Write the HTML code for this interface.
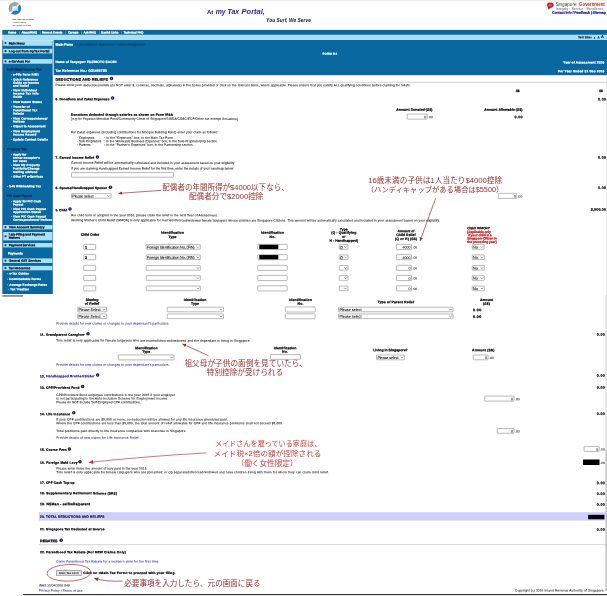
<!DOCTYPE html>
<html><head><meta charset="utf-8"><title>myTax Portal</title><style>

html,body{margin:0;padding:0;background:#fff;}
body{width:607px;height:596px;position:relative;overflow:hidden;font-family:"Liberation Sans",sans-serif;}
#pg{position:absolute;left:0;top:0;width:607px;height:596px;overflow:hidden;will-change:transform;transform:translateZ(0);}
#tx{position:absolute;left:0;top:0;width:607px;height:596px;transform-origin:303.5px 298px;transform:matrix(1,0.0007,0,1,0,0);}
.r{position:absolute;}
.t{position:absolute;white-space:nowrap;line-height:6px;height:6px;margin:0;padding:0;-webkit-text-stroke:0.07px;}
.b{font-weight:bold;-webkit-text-stroke:0.22px;}
.i{font-style:italic;}
.ic{position:absolute;width:3.4px;height:3.4px;border-radius:50%;background:radial-gradient(circle,#8c8cc0 0,#14145e 0.9px,#14145e 100%);}

.ov{position:absolute;left:0;top:0;}

</style></head><body><div id="pg">
<svg class="ov" width="607" height="596" viewBox="0 0 607 596"><rect x="0.00" y="0.40" width="607.00" height="0.80" fill="#e4e4e4"/><rect x="2.30" y="29.90" width="604.70" height="5.00" fill="#08689f"/><rect x="2.30" y="34.80" width="604.70" height="5.40" fill="#a9e0f5"/><rect x="3.20" y="40.00" width="49.20" height="0.50" fill="#c8ecfa"/><rect x="2.30" y="40.30" width="1.00" height="253.70" fill="#08689f"/><rect x="3.00" y="41.00" width="49.80" height="253.00" fill="#08689f"/><rect x="52.80" y="40.20" width="1.00" height="35.00" fill="#e4f5fc"/><rect x="53.70" y="40.00" width="553.30" height="35.20" fill="#08689f"/><rect x="2.30" y="295.00" width="20.80" height="1.80" fill="#8e8e8e"/><rect x="606.00" y="75.20" width="1.00" height="219.80" fill="#efefef"/><rect x="605.20" y="295.00" width="1.80" height="155.30" fill="#e4e4e4"/><rect x="605.40" y="450.30" width="1.60" height="141.10" fill="#c6c6c6"/><g><circle cx="14.9" cy="8.4" r="6.3" fill="#a2a2a6"/><path d="M10.45 12.85 A6.3 6.3 0 0 0 19.35 3.95 Z" fill="#1f80c4"/><path d="M12.4 10.8 L12.4 6.3 L18.1 6.3 Z" fill="#f4f8fb"/><path d="M12.4 10.8 L18.1 10.8 L18.1 6.3 Z" fill="#b4e0f6"/><path d="M10.3 13.0 L19.5 3.8" stroke="#fff" stroke-width="1.5" fill="none"/><path d="M11.2 12.1 L18.8 4.5" stroke="#9a9aa2" stroke-width="0.45" fill="none"/></g><text x="12.5" y="19.65" font-family="'Liberation Sans',sans-serif" font-size="2.35" font-weight="bold" fill="#3a3a3a" textLength="21.5" lengthAdjust="spacingAndGlyphs">INLAND REVENUE</text><text x="12.5" y="22.75" font-family="'Liberation Sans',sans-serif" font-size="2.35" font-weight="bold" fill="#3a3a3a" textLength="13.8" lengthAdjust="spacingAndGlyphs">AUTHORITY</text><text x="12.5" y="25.8" font-family="'Liberation Sans',sans-serif" font-size="2.35" font-weight="bold" fill="#3a3a3a" textLength="18.5" lengthAdjust="spacingAndGlyphs">OF SINGAPORE</text><text x="207" y="13.9" font-family="'Liberation Sans',sans-serif" font-size="5.4" font-weight="bold" fill="#17174a" textLength="6.4" lengthAdjust="spacingAndGlyphs">At</text><text x="215.7" y="13.9" font-family="'Liberation Sans',sans-serif" font-size="7.8" font-weight="bold" font-style="italic" fill="#1c1c90" textLength="23.4" lengthAdjust="spacingAndGlyphs">my Tax</text><text x="241.6" y="13.9" font-family="'Liberation Sans',sans-serif" font-size="7.8" font-weight="bold" font-style="italic" fill="#2626be" textLength="23.3" lengthAdjust="spacingAndGlyphs">Portal,</text><text x="266.1" y="21.7" font-family="'Liberation Sans',sans-serif" font-size="4.5" font-weight="bold" font-style="italic" fill="#151515" textLength="44.8" lengthAdjust="spacingAndGlyphs">You Surf, We Serve</text><text x="555.4" y="6.05" font-family="'Liberation Sans',sans-serif" font-size="4.5" fill="#3c3c3c" textLength="21.2" lengthAdjust="spacingAndGlyphs">Singapore</text><text x="579.1" y="6.05" font-family="'Liberation Sans',sans-serif" font-size="4.5" font-weight="bold" fill="#cc2222" textLength="25.7" lengthAdjust="spacingAndGlyphs">Government</text><text x="555.8" y="9.55" font-family="'Liberation Sans',sans-serif" font-size="3.2" fill="#666" textLength="47.7" lengthAdjust="spacingAndGlyphs">Integrity · Service · Excellence</text><g><path d="M547.1 4.4 Q547.6 2.9 549.2 2.6 Q551.2 2.2 552.6 3.0 Q553.9 3.8 553.7 5.2 Q553.5 6.8 551.9 7.6 Q550.4 8.1 549.6 8.8 L548.6 9.9 Q548.4 8.4 547.9 7.4 Q546.9 6.0 547.1 4.4 Z" fill="#cf1a26"/><ellipse cx="550.2" cy="5.3" rx="1.6" ry="1.3" fill="#ee5564"/></g><rect x="3.20" y="40.30" width="49.20" height="5.50" fill="#a9e0f5"/><rect x="4.60" y="42.15" width="1.80" height="1.80" fill="#3c2040"/><rect x="3.20" y="48.80" width="49.20" height="4.60" fill="#a9e0f5"/><rect x="4.60" y="50.20" width="1.80" height="1.80" fill="#3c2040"/><rect x="3.20" y="59.10" width="49.20" height="4.60" fill="#a9e0f5"/><rect x="4.60" y="60.50" width="1.80" height="1.80" fill="#3c2040"/><rect x="3.20" y="225.00" width="49.20" height="4.40" fill="#a9e0f5"/><rect x="4.60" y="226.30" width="1.80" height="1.80" fill="#3c2040"/><rect x="3.20" y="232.00" width="49.20" height="8.40" fill="#a9e0f5"/><rect x="4.60" y="235.30" width="1.80" height="1.80" fill="#3c2040"/><rect x="3.20" y="243.00" width="49.20" height="4.40" fill="#a9e0f5"/><rect x="4.60" y="244.30" width="1.80" height="1.80" fill="#3c2040"/><rect x="3.20" y="258.40" width="49.20" height="4.60" fill="#a9e0f5"/><rect x="4.60" y="259.80" width="1.80" height="1.80" fill="#3c2040"/><rect x="3.20" y="265.90" width="49.20" height="4.40" fill="#a9e0f5"/><rect x="4.60" y="267.20" width="1.80" height="1.80" fill="#3c2040"/><rect x="11.00" y="74.35" width="0.80" height="0.80" fill="#e6f4fb"/><rect x="11.00" y="79.35" width="0.80" height="0.80" fill="#e6f4fb"/><rect x="11.00" y="90.05" width="0.80" height="0.80" fill="#e6f4fb"/><rect x="11.00" y="101.65" width="0.80" height="0.80" fill="#e6f4fb"/><rect x="11.00" y="106.55" width="0.80" height="0.80" fill="#e6f4fb"/><rect x="11.00" y="118.15" width="0.80" height="0.80" fill="#e6f4fb"/><rect x="11.00" y="126.05" width="0.80" height="0.80" fill="#e6f4fb"/><rect x="11.00" y="131.05" width="0.80" height="0.80" fill="#e6f4fb"/><rect x="11.00" y="139.25" width="0.80" height="0.80" fill="#e6f4fb"/><rect x="11.00" y="154.15" width="0.80" height="0.80" fill="#e6f4fb"/><rect x="11.00" y="164.85" width="0.80" height="0.80" fill="#e6f4fb"/><rect x="11.00" y="176.35" width="0.80" height="0.80" fill="#e6f4fb"/><rect x="7.30" y="186.05" width="0.80" height="0.80" fill="#e6f4fb"/><rect x="11.00" y="201.05" width="0.80" height="0.80" fill="#e6f4fb"/><rect x="11.00" y="208.65" width="0.80" height="0.80" fill="#e6f4fb"/><rect x="11.00" y="216.25" width="0.80" height="0.80" fill="#e6f4fb"/><rect x="7.30" y="273.35" width="0.80" height="0.80" fill="#e6f4fb"/><rect x="7.30" y="278.75" width="0.80" height="0.80" fill="#e6f4fb"/><rect x="7.30" y="284.45" width="0.80" height="0.80" fill="#e6f4fb"/><rect x="8.30" y="289.05" width="0.80" height="0.80" fill="#e6f4fb"/><rect x="53.70" y="81.85" width="553.30" height="0.70" fill="#c0c0c0"/><rect x="407.27" y="114.03" width="19.95" height="5.15" rx="0.4" fill="#fff" stroke="#808080" stroke-width="0.55"/><rect x="71.48" y="172.58" width="102.05" height="4.65" rx="0.4" fill="#fff" stroke="#808080" stroke-width="0.55"/><rect x="71.48" y="193.62" width="39.65" height="4.55" rx="0.3" fill="#fff" stroke="#808080" stroke-width="0.55"/><rect x="498.27" y="193.33" width="18.45" height="5.15" rx="0.4" fill="#fff" stroke="#808080" stroke-width="0.55"/><rect x="83.78" y="244.33" width="11.85" height="5.15" rx="0.4" fill="#fff" stroke="#808080" stroke-width="0.55"/><rect x="146.18" y="244.58" width="54.15" height="4.65" rx="0.3" fill="#fff" stroke="#808080" stroke-width="0.55"/><rect x="257.77" y="244.33" width="29.45" height="5.15" rx="0.8" fill="#fff" stroke="#808080" stroke-width="0.55"/><rect x="259.30" y="244.75" width="19.00" height="4.30" fill="#000"/><rect x="339.27" y="244.58" width="8.75" height="4.65" rx="0.3" fill="#fff" stroke="#808080" stroke-width="0.55"/><rect x="396.57" y="244.33" width="14.95" height="5.15" rx="0.4" fill="#fff" stroke="#808080" stroke-width="0.55"/><rect x="472.27" y="244.58" width="11.95" height="4.65" rx="0.3" fill="#fff" stroke="#808080" stroke-width="0.55"/><rect x="83.78" y="254.62" width="11.85" height="5.15" rx="0.4" fill="#fff" stroke="#808080" stroke-width="0.55"/><rect x="146.18" y="254.88" width="54.15" height="4.65" rx="0.3" fill="#fff" stroke="#808080" stroke-width="0.55"/><rect x="257.77" y="254.62" width="29.45" height="5.15" rx="0.8" fill="#fff" stroke="#808080" stroke-width="0.55"/><rect x="259.30" y="255.05" width="19.00" height="4.30" fill="#000"/><rect x="339.27" y="254.88" width="8.75" height="4.65" rx="0.3" fill="#fff" stroke="#808080" stroke-width="0.55"/><rect x="396.57" y="254.62" width="14.95" height="5.15" rx="0.4" fill="#fff" stroke="#808080" stroke-width="0.55"/><rect x="472.27" y="254.88" width="11.95" height="4.65" rx="0.3" fill="#fff" stroke="#808080" stroke-width="0.55"/><rect x="83.78" y="265.32" width="11.85" height="5.15" rx="0.4" fill="#fff" stroke="#808080" stroke-width="0.55"/><rect x="146.18" y="265.57" width="54.15" height="4.65" rx="0.3" fill="#fff" stroke="#808080" stroke-width="0.55"/><rect x="257.77" y="265.32" width="29.45" height="5.15" rx="0.8" fill="#fff" stroke="#808080" stroke-width="0.55"/><rect x="339.27" y="265.57" width="8.75" height="4.65" rx="0.3" fill="#fff" stroke="#808080" stroke-width="0.55"/><rect x="396.57" y="265.32" width="14.95" height="5.15" rx="0.4" fill="#fff" stroke="#808080" stroke-width="0.55"/><rect x="472.27" y="265.57" width="11.95" height="4.65" rx="0.3" fill="#fff" stroke="#808080" stroke-width="0.55"/><rect x="83.78" y="275.42" width="11.85" height="5.15" rx="0.4" fill="#fff" stroke="#808080" stroke-width="0.55"/><rect x="146.18" y="275.67" width="54.15" height="4.65" rx="0.3" fill="#fff" stroke="#808080" stroke-width="0.55"/><rect x="257.77" y="275.42" width="29.45" height="5.15" rx="0.8" fill="#fff" stroke="#808080" stroke-width="0.55"/><rect x="339.27" y="275.67" width="8.75" height="4.65" rx="0.3" fill="#fff" stroke="#808080" stroke-width="0.55"/><rect x="396.57" y="275.42" width="14.95" height="5.15" rx="0.4" fill="#fff" stroke="#808080" stroke-width="0.55"/><rect x="472.27" y="275.67" width="11.95" height="4.65" rx="0.3" fill="#fff" stroke="#808080" stroke-width="0.55"/><rect x="83.78" y="285.82" width="11.85" height="5.15" rx="0.4" fill="#fff" stroke="#808080" stroke-width="0.55"/><rect x="146.18" y="286.07" width="54.15" height="4.65" rx="0.3" fill="#fff" stroke="#808080" stroke-width="0.55"/><rect x="257.77" y="285.82" width="29.45" height="5.15" rx="0.8" fill="#fff" stroke="#808080" stroke-width="0.55"/><rect x="339.27" y="286.07" width="8.75" height="4.65" rx="0.3" fill="#fff" stroke="#808080" stroke-width="0.55"/><rect x="396.57" y="285.82" width="14.95" height="5.15" rx="0.4" fill="#fff" stroke="#808080" stroke-width="0.55"/><rect x="472.27" y="286.07" width="11.95" height="4.65" rx="0.3" fill="#fff" stroke="#808080" stroke-width="0.55"/><rect x="77.78" y="307.17" width="28.75" height="4.65" rx="0.3" fill="#fff" stroke="#808080" stroke-width="0.55"/><rect x="167.28" y="307.17" width="56.25" height="4.65" rx="0.3" fill="#fff" stroke="#808080" stroke-width="0.55"/><rect x="285.27" y="306.97" width="29.95" height="5.05" rx="1.0" fill="#fff" stroke="#808080" stroke-width="0.55"/><rect x="338.57" y="307.17" width="114.45" height="4.65" rx="0.3" fill="#fff" stroke="#808080" stroke-width="0.55"/><rect x="77.78" y="313.97" width="28.75" height="4.65" rx="0.3" fill="#fff" stroke="#808080" stroke-width="0.55"/><rect x="167.28" y="313.97" width="56.25" height="4.65" rx="0.3" fill="#fff" stroke="#808080" stroke-width="0.55"/><rect x="285.27" y="313.77" width="29.95" height="5.05" rx="1.0" fill="#fff" stroke="#808080" stroke-width="0.55"/><rect x="338.57" y="313.97" width="114.45" height="4.65" rx="0.3" fill="#fff" stroke="#808080" stroke-width="0.55"/><rect x="118.28" y="354.87" width="55.75" height="5.05" rx="0.3" fill="#fff" stroke="#808080" stroke-width="0.55"/><rect x="270.47" y="354.62" width="29.95" height="4.75" rx="0.4" fill="#fff" stroke="#808080" stroke-width="0.55"/><rect x="376.57" y="354.97" width="27.65" height="4.85" rx="0.3" fill="#fff" stroke="#808080" stroke-width="0.55"/><rect x="473.27" y="354.97" width="14.75" height="4.85" rx="0.4" fill="#fff" stroke="#808080" stroke-width="0.55"/><rect x="484.77" y="396.07" width="29.25" height="5.05" rx="0.4" fill="#fff" stroke="#808080" stroke-width="0.55"/><rect x="497.27" y="428.57" width="16.75" height="4.65" rx="0.4" fill="#fff" stroke="#808080" stroke-width="0.55"/><rect x="584.07" y="446.57" width="15.15" height="4.85" rx="0.4" fill="#fff" stroke="#808080" stroke-width="0.55"/><rect x="583.00" y="459.50" width="16.50" height="5.50" fill="#000"/><rect x="38.80" y="512.20" width="566.70" height="8.40" fill="#cfcff8"/><rect x="588.10" y="514.80" width="16.30" height="4.50" fill="#05050f"/><rect x="38.80" y="544.40" width="568.20" height="0.70" fill="#c6c6c6"/><rect x="56.55" y="570.65" width="24.90" height="4.60" rx="0" fill="#e6e6e6" stroke="#888" stroke-width="0.7"/><rect x="23.20" y="594.10" width="583.80" height="1.00" fill="#1a1a1a"/></svg>
<div id="tx">
<div id="t0" class="t b" style="top:9px;transform:translateY(0.66px);font-size:3.5px;color:#2222a8;letter-spacing:-0.070px;left:552.00px;"><span>Contact Info / Feedback | Sitemap</span></div>
<div id="t1" class="t b" style="top:29px;transform:translateY(0.62px);font-size:3.05px;color:#fff;letter-spacing:-0.156px;left:8.10px;"><span>Home</span></div>
<div id="t2" class="t" style="top:29px;transform:translateY(0.71px);font-size:2.8px;color:#b8dcf0;left:19.00px;"><span>|</span></div>
<div id="t3" class="t b" style="top:29px;transform:translateY(0.61px);font-size:3.05px;color:#fff;letter-spacing:-0.160px;left:21.50px;"><span>About IRAS</span></div>
<div id="t4" class="t" style="top:29px;transform:translateY(0.69px);font-size:2.8px;color:#b8dcf0;left:39.80px;"><span>|</span></div>
<div id="t5" class="t b" style="top:29px;transform:translateY(0.59px);font-size:3.05px;color:#fff;letter-spacing:-0.113px;left:42.00px;"><span>News &amp; Events</span></div>
<div id="t6" class="t" style="top:29px;transform:translateY(0.67px);font-size:2.8px;color:#b8dcf0;left:65.30px;"><span>|</span></div>
<div id="t7" class="t b" style="top:29px;transform:translateY(0.58px);font-size:3.05px;color:#fff;letter-spacing:-0.143px;left:68.00px;"><span>Careers</span></div>
<div id="t8" class="t" style="top:29px;transform:translateY(0.66px);font-size:2.8px;color:#b8dcf0;left:81.40px;"><span>|</span></div>
<div id="t9" class="t b" style="top:29px;transform:translateY(0.56px);font-size:3.05px;color:#fff;letter-spacing:-0.174px;left:83.50px;"><span>Ask IRAS</span></div>
<div id="t10" class="t" style="top:29px;transform:translateY(0.65px);font-size:2.8px;color:#b8dcf0;left:99.20px;"><span>|</span></div>
<div id="t11" class="t b" style="top:29px;transform:translateY(0.55px);font-size:3.05px;color:#fff;letter-spacing:-0.057px;left:101.00px;"><span>Useful Links</span></div>
<div id="t12" class="t" style="top:29px;transform:translateY(0.63px);font-size:2.8px;color:#b8dcf0;left:121.40px;"><span>|</span></div>
<div id="t13" class="t b" style="top:29px;transform:translateY(0.53px);font-size:3.05px;color:#fff;letter-spacing:-0.079px;left:123.50px;"><span>Technical FAQ</span></div>
<div id="t14" class="t b" style="top:34px;transform:translateY(0.17px);font-size:2.9px;color:#1a2a3a;letter-spacing:0.058px;left:577.90px;"><span>Text Size:</span></div>
<div id="t15" class="t b" style="top:34px;transform:translateY(0.42px);font-size:2.0px;color:#1a2a3a;left:593.70px;"><span>A</span></div>
<div id="t16" class="t b" style="top:34px;transform:translateY(0.40px);font-size:2.8px;color:#1a2a3a;left:597.40px;"><span>A</span></div>
<div id="t17" class="t b" style="top:33px;transform:translateY(0.90px);font-size:3.9px;color:#1a2a3a;left:601.00px;"><span>A</span></div>
<div id="t18" class="t b" style="top:41px;transform:translateY(0.82px);font-size:3.5px;color:#fff;letter-spacing:-0.038px;left:55.60px;"><span>Main Form</span></div>
<div id="t19" class="t i" style="top:41px;transform:translateY(0.73px);font-size:3.3px;color:#063a60;letter-spacing:0.061px;left:74.30px;"><span>&gt; Consolidated Statement &gt; Acknowledgement</span></div>
<div id="t20" class="t b" style="top:50px;transform:translateY(0.83px);font-size:2.9px;color:#fff;letter-spacing:0.247px;left:322.50px;"><span>FORM B1</span></div>
<div id="t21" class="t b" style="top:59px;transform:translateY(0.14px);font-size:3.3px;color:#fff;letter-spacing:0.074px;left:55.50px;"><span>Name of Taxpayer: FUJIMOTO SAORI</span></div>
<div id="t22" class="t b" style="top:67px;transform:translateY(0.95px);font-size:3.3px;color:#fff;letter-spacing:0.117px;left:55.50px;"><span>Tax Reference No.: G3149573B</span></div>
<div id="t23" class="t b" style="top:59px;transform:translateY(0.26px);font-size:3.2px;color:#fff;letter-spacing:0.129px;left:563.30px;"><span>Year of Assessment 2016</span></div>
<div id="t24" class="t b" style="top:68px;transform:translateY(0.07px);font-size:3.2px;color:#fff;letter-spacing:0.153px;left:558.00px;"><span>For Year Ended 31 Dec 2015</span></div>
<div id="t25" class="t b" style="top:40px;transform:translateY(0.59px);font-size:3.3px;color:#0a1428;letter-spacing:-0.106px;left:8.70px;"><span>Main Menu</span></div>
<div id="t26" class="t b" style="top:48px;transform:translateY(0.38px);font-size:3.3px;color:#0a1428;letter-spacing:-0.038px;left:8.70px;"><span>Log out from myTax Portal</span></div>
<div id="t27" class="t b" style="top:58px;transform:translateY(0.59px);font-size:3.3px;color:#0a1428;letter-spacing:-0.110px;left:8.70px;"><span>e-Services For</span></div>
<div id="t28" class="t b" style="top:224px;transform:translateY(0.38px);font-size:3.3px;color:#0a1428;letter-spacing:-0.084px;left:8.70px;"><span>View Account Summary</span></div>
<div id="t29" class="t b" style="top:231px;transform:translateY(0.58px);font-size:3.3px;color:#0a1428;letter-spacing:-0.074px;left:8.70px;"><span>Late Filing and Payment</span></div>
<div id="t30" class="t b" style="top:234px;transform:translateY(0.89px);font-size:3.3px;color:#0a1428;letter-spacing:-0.072px;left:8.70px;"><span>Matters</span></div>
<div id="t31" class="t b" style="top:242px;transform:translateY(0.49px);font-size:3.3px;color:#0a1428;letter-spacing:-0.109px;left:8.70px;"><span>Payment Services</span></div>
<div id="t32" class="t b" style="top:257px;transform:translateY(0.89px);font-size:3.3px;color:#0a1428;letter-spacing:-0.113px;left:8.70px;"><span>General GST Services</span></div>
<div id="t33" class="t b" style="top:265px;transform:translateY(0.39px);font-size:3.3px;color:#0a1428;letter-spacing:-0.135px;left:8.70px;"><span>Tax Resources</span></div>
<div id="t34" class="t b" style="top:66px;transform:translateY(0.76px);font-size:3.2px;color:#0b2a5a;letter-spacing:0.072px;left:7.00px;"><span>Individual Income Tax</span></div>
<div id="t35" class="t b" style="top:146px;transform:translateY(0.46px);font-size:3.2px;color:#0b2a5a;letter-spacing:0.023px;left:7.00px;"><span>Property Tax</span></div>
<div id="t36" class="t b" style="top:193px;transform:translateY(0.16px);font-size:3.2px;color:#0b2a5a;letter-spacing:-0.051px;left:7.00px;"><span>PIC Cash Payout</span></div>
<div id="t37" class="t b" style="top:71px;transform:translateY(0.78px);font-size:2.95px;color:#fff;letter-spacing:0.164px;left:13.00px;"><span>e-File Form B/B1</span></div>
<div id="t38" class="t b" style="top:76px;transform:translateY(0.78px);font-size:2.95px;color:#fff;letter-spacing:0.115px;left:13.00px;"><span>Quick Reference</span></div>
<div id="t39" class="t b" style="top:79px;transform:translateY(0.88px);font-size:2.95px;color:#fff;letter-spacing:0.140px;left:13.00px;"><span>Guide on Income</span></div>
<div id="t40" class="t b" style="top:82px;transform:translateY(0.88px);font-size:2.95px;color:#fff;letter-spacing:0.195px;left:13.00px;"><span>and Relief</span></div>
<div id="t41" class="t b" style="top:87px;transform:translateY(0.48px);font-size:2.95px;color:#fff;letter-spacing:0.188px;left:13.00px;"><span>View Individual</span></div>
<div id="t42" class="t b" style="top:90px;transform:translateY(0.68px);font-size:2.95px;color:#fff;letter-spacing:0.239px;left:13.00px;"><span>Income Tax Info</span></div>
<div id="t43" class="t b" style="top:93px;transform:translateY(0.99px);font-size:2.95px;color:#fff;letter-spacing:0.168px;left:13.00px;"><span>Guide</span></div>
<div id="t44" class="t b" style="top:99px;transform:translateY(0.08px);font-size:2.95px;color:#fff;letter-spacing:0.122px;left:13.00px;"><span>View Return Status</span></div>
<div id="t45" class="t b" style="top:103px;transform:translateY(0.98px);font-size:2.95px;color:#fff;letter-spacing:0.161px;left:13.00px;"><span>Transfer of</span></div>
<div id="t46" class="t b" style="top:107px;transform:translateY(0.38px);font-size:2.95px;color:#fff;letter-spacing:0.178px;left:13.00px;"><span>Parenthood Tax</span></div>
<div id="t47" class="t b" style="top:110px;transform:translateY(0.58px);font-size:2.95px;color:#fff;letter-spacing:0.221px;left:13.00px;"><span>Rebate</span></div>
<div id="t48" class="t b" style="top:115px;transform:translateY(0.58px);font-size:2.95px;color:#fff;letter-spacing:0.141px;left:13.00px;"><span>View Correspondence/</span></div>
<div id="t49" class="t b" style="top:118px;transform:translateY(0.68px);font-size:2.95px;color:#fff;letter-spacing:0.163px;left:13.00px;"><span>Notices</span></div>
<div id="t50" class="t b" style="top:123px;transform:translateY(0.48px);font-size:2.95px;color:#fff;letter-spacing:0.097px;left:13.00px;"><span>Object to Assessment</span></div>
<div id="t51" class="t b" style="top:128px;transform:translateY(0.48px);font-size:2.95px;color:#fff;letter-spacing:0.136px;left:13.00px;"><span>View Employment</span></div>
<div id="t52" class="t b" style="top:131px;transform:translateY(0.68px);font-size:2.95px;color:#fff;letter-spacing:0.172px;left:13.00px;"><span>Income Record</span></div>
<div id="t53" class="t b" style="top:136px;transform:translateY(0.68px);font-size:2.95px;color:#fff;letter-spacing:0.126px;left:13.00px;"><span>Update Contact Details</span></div>
<div id="t54" class="t b" style="top:151px;transform:translateY(0.58px);font-size:2.95px;color:#fff;letter-spacing:0.049px;left:13.00px;"><span>Apply for</span></div>
<div id="t55" class="t b" style="top:154px;transform:translateY(0.88px);font-size:2.95px;color:#fff;letter-spacing:0.172px;left:13.00px;"><span>owner-occupier's</span></div>
<div id="t56" class="t b" style="top:158px;transform:translateY(0.08px);font-size:2.95px;color:#fff;letter-spacing:0.238px;left:13.00px;"><span>tax rates</span></div>
<div id="t57" class="t b" style="top:162px;transform:translateY(0.28px);font-size:2.95px;color:#fff;letter-spacing:0.157px;left:13.00px;"><span>View My Property</span></div>
<div id="t58" class="t b" style="top:165px;transform:translateY(0.68px);font-size:2.95px;color:#fff;letter-spacing:0.189px;left:13.00px;"><span>Portfolio/Change</span></div>
<div id="t59" class="t b" style="top:169px;transform:translateY(0.08px);font-size:2.95px;color:#fff;letter-spacing:0.137px;left:13.00px;"><span>mailing address</span></div>
<div id="t60" class="t b" style="top:173px;transform:translateY(0.78px);font-size:2.95px;color:#fff;letter-spacing:0.104px;left:13.00px;"><span>Other PT e-Services</span></div>
<div id="t61" class="t b" style="top:183px;transform:translateY(0.48px);font-size:2.95px;color:#fff;letter-spacing:0.169px;left:9.30px;"><span>S45 Withholding Tax</span></div>
<div id="t62" class="t b" style="top:198px;transform:translateY(0.48px);font-size:2.95px;color:#fff;letter-spacing:0.082px;left:13.00px;"><span>Apply for PIC Cash</span></div>
<div id="t63" class="t b" style="top:201px;transform:translateY(0.68px);font-size:2.95px;color:#fff;letter-spacing:0.101px;left:13.00px;"><span>Payout</span></div>
<div id="t64" class="t b" style="top:206px;transform:translateY(0.08px);font-size:2.95px;color:#fff;letter-spacing:0.107px;left:13.00px;"><span>View PIC Cash Payout</span></div>
<div id="t65" class="t b" style="top:209px;transform:translateY(0.28px);font-size:2.95px;color:#fff;letter-spacing:0.130px;left:13.00px;"><span>Application Status</span></div>
<div id="t66" class="t b" style="top:213px;transform:translateY(0.68px);font-size:2.95px;color:#fff;letter-spacing:0.107px;left:13.00px;"><span>View PIC Cash Payout</span></div>
<div id="t67" class="t b" style="top:216px;transform:translateY(0.87px);font-size:2.95px;color:#fff;letter-spacing:0.155px;left:13.00px;"><span>Correspondence/ Notices</span></div>
<div id="t68" class="t b" style="top:250px;transform:translateY(0.66px);font-size:3.2px;color:#fff;letter-spacing:-0.037px;left:8.00px;"><span>Payments</span></div>
<div id="t69" class="t b" style="top:270px;transform:translateY(0.78px);font-size:2.95px;color:#fff;letter-spacing:0.115px;left:9.30px;"><span>e-Tax Guides</span></div>
<div id="t70" class="t b" style="top:276px;transform:translateY(0.18px);font-size:2.95px;color:#fff;letter-spacing:0.105px;left:9.30px;"><span>Downloadable Forms</span></div>
<div id="t71" class="t b" style="top:281px;transform:translateY(0.88px);font-size:2.95px;color:#fff;letter-spacing:0.119px;left:9.30px;"><span>Average Exchange Rates</span></div>
<div id="t72" class="t b" style="top:286px;transform:translateY(0.48px);font-size:2.95px;color:#fff;letter-spacing:0.158px;left:10.30px;"><span>Tax Treaties</span></div>
<div id="t73" class="t b" style="top:76px;transform:translateY(0.89px);font-size:3.7px;color:#000;letter-spacing:0.126px;left:55.50px;"><span>DEDUCTIONS AND RELIEFS</span></div>
<div id="t74" class="t" style="top:82px;transform:translateY(0.28px);font-size:3.1px;color:#111;letter-spacing:0.126px;left:55.50px;"><span>Please enter your deductions/reliefs (do NOT enter $, commas, decimals, alphabets) in the boxes provided or click on the relevant items, where applicable. Please ensure that you satisfy ALL qualifying conditions before claiming for reliefs.</span></div>
<div id="t75" class="t b" style="top:87px;transform:translateY(0.84px);font-size:3.3px;color:#000;letter-spacing:-0.347px;left:515.80px;"><span>S$</span></div>
<div id="t76" class="t b" style="top:87px;transform:translateY(0.78px);font-size:3.3px;color:#000;letter-spacing:-0.247px;left:599.00px;"><span>S$</span></div>
<div id="t77" class="t b" style="top:96px;transform:translateY(0.41px);font-size:3.2px;color:#000;letter-spacing:0.111px;left:55.50px;"><span>6. Donations and Zakat Expenses</span></div>
<div id="t78" class="t b" style="top:96px;transform:translateY(0.22px);font-size:3.7px;color:#111;letter-spacing:0.271px;right:0.73px;"><span>0.00</span></div>
<div id="t79" class="t b" style="top:106px;transform:translateY(0.76px);font-size:3.45px;color:#000;letter-spacing:0.059px;left:396.30px;"><span>Amount Donated (S$)</span></div>
<div id="t80" class="t b" style="top:106px;transform:translateY(0.70px);font-size:3.45px;color:#000;letter-spacing:0.044px;left:484.30px;"><span>Amount Allowable (S$)</span></div>
<div id="t81" class="t b" style="top:111px;transform:translateY(0.87px);font-size:3.15px;color:#000;letter-spacing:0.176px;left:71.00px;"><span>Donations deducted through salaries as shown on Form IR8A</span></div>
<div id="t82" class="t" style="top:115px;transform:translateY(0.93px);font-size:3.1px;color:#111;letter-spacing:0.134px;left:71.00px;"><span>(e.g for Yayasan Mendaki Fund/Community Chest of Singapore/SINDA/CDAC/ECF/Other tax exempt donations)</span></div>
<div id="t83" class="t b" style="top:114px;transform:translateY(0.08px);font-size:3.7px;color:#111;letter-spacing:0.271px;right:84.23px;"><span>0.00</span></div>
<div id="t84" class="t" style="top:129px;transform:translateY(0.34px);font-size:3.1px;color:#111;letter-spacing:0.122px;left:71.00px;"><span>For Zakat expenses (including contributions for Mosque Building Fund) enter your claim as follows:</span></div>
<div id="t85" class="t" style="top:134px;transform:translateY(0.88px);font-size:3.1px;color:#111;left:77.00px;"><span>- Employees</span></div>
<div id="t86" class="t" style="top:134px;transform:translateY(0.85px);font-size:3.1px;color:#111;letter-spacing:0.145px;left:104.30px;"><span>: in the "Expenses" box, in the Main Tax Form.</span></div>
<div id="t87" class="t" style="top:138px;transform:translateY(0.38px);font-size:3.1px;color:#111;left:77.00px;"><span>- Sole-Proprietors</span></div>
<div id="t88" class="t" style="top:138px;transform:translateY(0.33px);font-size:3.1px;color:#111;letter-spacing:0.080px;left:104.30px;"><span>: in the "Allowable Business Expenses" box, in the Sole-Proprietorship section.</span></div>
<div id="t89" class="t" style="top:141px;transform:translateY(0.98px);font-size:3.1px;color:#111;left:77.00px;"><span>- Partners</span></div>
<div id="t90" class="t" style="top:141px;transform:translateY(0.94px);font-size:3.1px;color:#111;letter-spacing:0.111px;left:104.30px;"><span>: in the "Partner's Expenses" box, in the Partnership section.</span></div>
<div id="t91" class="t b" style="top:154px;transform:translateY(0.92px);font-size:3.2px;color:#000;letter-spacing:0.115px;left:55.50px;"><span>7. Earned Income Relief</span></div>
<div id="t92" class="t b" style="top:154px;transform:translateY(0.42px);font-size:3.7px;color:#111;letter-spacing:0.271px;right:0.73px;"><span>0.00</span></div>
<div id="t93" class="t" style="top:159px;transform:translateY(0.99px);font-size:3.1px;color:#111;letter-spacing:0.102px;left:71.20px;"><span>Earned Income Relief will be automatically calculated and included in your assessment based on your eligibility.</span></div>
<div id="t94" class="t" style="top:165px;transform:translateY(0.54px);font-size:3.1px;color:#111;letter-spacing:0.077px;left:71.20px;"><span>If you are claiming Handicapped Earned Income Relief for the first time, enter the details of your handicap below.</span></div>
<div id="t95" class="t b" style="top:185px;transform:translateY(0.22px);font-size:3.2px;color:#000;letter-spacing:0.116px;left:55.50px;"><span>8. Spouse/Handicapped Spouse</span></div>
<div id="t96" class="t b" style="top:184px;transform:translateY(0.87px);font-size:3.7px;color:#111;letter-spacing:0.271px;right:0.73px;"><span>0.00</span></div>
<div id="t97" class="t b" style="top:207px;transform:translateY(0.53px);font-size:3.2px;color:#000;letter-spacing:0.026px;left:55.50px;"><span>9. Child</span></div>
<div id="t98" class="t b" style="top:206px;transform:translateY(0.53px);font-size:3.7px;color:#111;letter-spacing:0.120px;right:0.88px;"><span>8,000.00</span></div>
<div id="t99" class="t" style="top:212px;transform:translateY(0.44px);font-size:3.1px;color:#111;letter-spacing:0.133px;left:71.20px;"><span>For child born or adopted in the year 2016, please claim the relief in the next Year of Assessment.</span></div>
<div id="t100" class="t" style="top:217px;transform:translateY(0.46px);font-size:3.1px;color:#111;letter-spacing:0.123px;left:71.20px;"><span>Working Mother's Child Relief (WMCR) is only applicable for married/divorced/widowed female taxpayers whose children are Singapore Citizens. This amount will be automatically calculated and included in your assessment based on your eligibility.</span></div>
<div id="t101" class="t b" style="top:231px;transform:translateY(0.98px);font-size:3.45px;color:#000;letter-spacing:-0.042px;left:-10.02px;width:200px;text-align:center;"><span>Child Order</span></div>
<div id="t102" class="t b" style="top:229px;transform:translateY(0.93px);font-size:3.45px;color:#000;letter-spacing:0.085px;left:72.54px;width:200px;text-align:center;"><span>Identification</span></div>
<div id="t103" class="t b" style="top:234px;transform:translateY(0.13px);font-size:3.45px;color:#000;letter-spacing:0.073px;left:72.54px;width:200px;text-align:center;"><span>Type</span></div>
<div id="t104" class="t b" style="top:229px;transform:translateY(0.86px);font-size:3.45px;color:#000;letter-spacing:0.085px;left:172.54px;width:200px;text-align:center;"><span>Identification</span></div>
<div id="t105" class="t b" style="top:234px;transform:translateY(0.06px);font-size:3.45px;color:#000;letter-spacing:0.227px;left:172.61px;width:200px;text-align:center;"><span>No.</span></div>
<div id="t106" class="t b" style="top:226px;transform:translateY(0.51px);font-size:3.45px;color:#000;letter-spacing:0.073px;left:243.84px;width:200px;text-align:center;"><span>Type</span></div>
<div id="t107" class="t b" style="top:229px;transform:translateY(0.81px);font-size:3.45px;color:#000;letter-spacing:0.094px;left:243.85px;width:200px;text-align:center;"><span>(Q - Qualifying</span></div>
<div id="t108" class="t b" style="top:233px;transform:translateY(0.81px);font-size:3.45px;color:#000;left:243.80px;width:200px;text-align:center;"><span>or</span></div>
<div id="t109" class="t b" style="top:237px;transform:translateY(0.81px);font-size:3.45px;color:#000;letter-spacing:0.016px;left:243.81px;width:200px;text-align:center;"><span>H - Handicapped)</span></div>
<div id="t110" class="t b" style="top:228px;transform:translateY(0.06px);font-size:3.45px;color:#000;letter-spacing:-0.023px;left:305.99px;width:200px;text-align:center;"><span>Amount of</span></div>
<div id="t111" class="t b" style="top:231px;transform:translateY(0.86px);font-size:3.45px;color:#000;letter-spacing:0.053px;left:306.03px;width:200px;text-align:center;"><span>Child Relief</span></div>
<div id="t112" class="t b" style="top:235px;transform:translateY(0.96px);font-size:3.45px;color:#000;letter-spacing:0.146px;left:306.07px;width:200px;text-align:center;"><span>(Q or H) (S$)</span></div>
<div id="t113" class="t b" style="top:225px;transform:translateY(0.07px);font-size:3.3px;color:#000;letter-spacing:-0.003px;left:467.20px;"><span>Claim WMCR?</span></div>
<div id="t114" class="t b" style="top:228px;transform:translateY(0.87px);font-size:3.3px;color:#c81818;letter-spacing:-0.118px;left:467.20px;"><span>[Applicable only</span></div>
<div id="t115" class="t b" style="top:232px;transform:translateY(0.17px);font-size:3.3px;color:#c81818;letter-spacing:-0.095px;left:468.20px;"><span>if your child is a</span></div>
<div id="t116" class="t b" style="top:235px;transform:translateY(0.47px);font-size:3.3px;color:#c81818;letter-spacing:-0.116px;left:467.20px;"><span>Singapore Citizen in</span></div>
<div id="t117" class="t b" style="top:238px;transform:translateY(0.97px);font-size:3.3px;color:#c81818;letter-spacing:-0.051px;left:467.20px;"><span>the preceding year]</span></div>
<div id="t118" class="t" style="top:114px;transform:translateY(0.21px);font-size:3.6px;color:#111;right:180.80px;"><span>0</span></div>
<div id="t119" class="t" style="top:114px;transform:translateY(0.10px);font-size:3.3px;color:#222;left:428.20px;"><span>.00</span></div>
<div id="t120" class="t" style="top:193px;transform:translateY(0.59px);font-size:3.8px;color:#000;letter-spacing:-0.116px;left:72.30px;"><span>Please select</span></div>
<div id="t121" class="t" style="top:193px;transform:translateY(0.45px);font-size:3.6px;color:#111;right:91.30px;"><span>0</span></div>
<div id="t122" class="t" style="top:193px;transform:translateY(0.34px);font-size:3.3px;color:#222;left:517.70px;"><span>.00</span></div>
<div id="t123" class="t b" style="top:244px;transform:translateY(0.78px);font-size:3.7px;color:#000;left:85.00px;"><span>1</span></div>
<div id="t124" class="t" style="top:244px;transform:translateY(0.53px);font-size:3.8px;color:#000;letter-spacing:-0.139px;left:147.00px;"><span>Foreign Identification No. (FIN)</span></div>
<div id="t125" class="t" style="top:244px;transform:translateY(0.64px);font-size:3.8px;color:#000;left:340.10px;"><span>Q</span></div>
<div id="t126" class="t" style="top:244px;transform:translateY(0.52px);font-size:3.6px;color:#111;right:196.50px;"><span>4000</span></div>
<div id="t127" class="t" style="top:244px;transform:translateY(0.41px);font-size:3.3px;color:#222;left:412.50px;"><span>.00</span></div>
<div id="t128" class="t" style="top:244px;transform:translateY(0.32px);font-size:3.8px;color:#000;left:473.10px;"><span>No</span></div>
<div id="t129" class="t b" style="top:255px;transform:translateY(0.08px);font-size:3.7px;color:#000;left:85.00px;"><span>2</span></div>
<div id="t130" class="t" style="top:254px;transform:translateY(0.83px);font-size:3.8px;color:#000;letter-spacing:-0.139px;left:147.00px;"><span>Foreign Identification No. (FIN)</span></div>
<div id="t131" class="t" style="top:254px;transform:translateY(0.94px);font-size:3.8px;color:#000;left:340.10px;"><span>Q</span></div>
<div id="t132" class="t" style="top:254px;transform:translateY(0.82px);font-size:3.6px;color:#111;right:196.50px;"><span>4000</span></div>
<div id="t133" class="t" style="top:254px;transform:translateY(0.71px);font-size:3.3px;color:#222;left:412.50px;"><span>.00</span></div>
<div id="t134" class="t" style="top:254px;transform:translateY(0.62px);font-size:3.8px;color:#000;left:473.10px;"><span>No</span></div>
<div id="t135" class="t" style="top:265px;transform:translateY(0.52px);font-size:3.6px;color:#111;right:196.50px;"><span>0</span></div>
<div id="t136" class="t" style="top:265px;transform:translateY(0.41px);font-size:3.3px;color:#222;left:412.50px;"><span>.00</span></div>
<div id="t137" class="t" style="top:265px;transform:translateY(0.32px);font-size:3.8px;color:#000;left:473.10px;"><span>No</span></div>
<div id="t138" class="t" style="top:275px;transform:translateY(0.62px);font-size:3.6px;color:#111;right:196.50px;"><span>0</span></div>
<div id="t139" class="t" style="top:275px;transform:translateY(0.51px);font-size:3.3px;color:#222;left:412.50px;"><span>.00</span></div>
<div id="t140" class="t" style="top:275px;transform:translateY(0.42px);font-size:3.8px;color:#000;left:473.10px;"><span>No</span></div>
<div id="t141" class="t" style="top:286px;transform:translateY(0.02px);font-size:3.6px;color:#111;right:196.50px;"><span>0</span></div>
<div id="t142" class="t" style="top:285px;transform:translateY(0.91px);font-size:3.3px;color:#222;left:412.50px;"><span>.00</span></div>
<div id="t143" class="t" style="top:285px;transform:translateY(0.82px);font-size:3.8px;color:#000;left:473.10px;"><span>No</span></div>
<div id="t144" class="t b" style="top:297px;transform:translateY(0.18px);font-size:3.45px;color:#000;letter-spacing:-0.049px;left:-8.02px;width:200px;text-align:center;"><span>Sharing</span></div>
<div id="t145" class="t b" style="top:300px;transform:translateY(0.78px);font-size:3.45px;color:#000;letter-spacing:0.117px;left:-7.94px;width:200px;text-align:center;"><span>of Relief</span></div>
<div id="t146" class="t b" style="top:297px;transform:translateY(0.11px);font-size:3.45px;color:#000;letter-spacing:0.085px;left:95.04px;width:200px;text-align:center;"><span>Identification</span></div>
<div id="t147" class="t b" style="top:300px;transform:translateY(0.71px);font-size:3.45px;color:#000;letter-spacing:0.073px;left:95.04px;width:200px;text-align:center;"><span>Type</span></div>
<div id="t148" class="t b" style="top:297px;transform:translateY(0.04px);font-size:3.45px;color:#000;letter-spacing:0.085px;left:200.54px;width:200px;text-align:center;"><span>Identification</span></div>
<div id="t149" class="t b" style="top:300px;transform:translateY(0.64px);font-size:3.45px;color:#000;letter-spacing:0.227px;left:200.61px;width:200px;text-align:center;"><span>No.</span></div>
<div id="t150" class="t b" style="top:299px;transform:translateY(0.07px);font-size:3.45px;color:#000;letter-spacing:0.128px;left:295.86px;width:200px;text-align:center;"><span>Type of Parent Relief</span></div>
<div id="t151" class="t b" style="top:296px;transform:translateY(0.91px);font-size:3.45px;color:#000;letter-spacing:0.003px;left:386.50px;width:200px;text-align:center;"><span>Amount</span></div>
<div id="t152" class="t b" style="top:300px;transform:translateY(0.71px);font-size:3.45px;color:#000;letter-spacing:0.167px;left:386.58px;width:200px;text-align:center;"><span>(S$)</span></div>
<div id="t153" class="t" style="top:307px;transform:translateY(0.19px);font-size:3.8px;color:#000;letter-spacing:-0.110px;left:78.60px;"><span>Please Select</span></div>
<div id="t154" class="t" style="top:307px;transform:translateY(0.01px);font-size:3.8px;color:#000;letter-spacing:-0.041px;left:339.40px;"><span>Please select</span></div>
<div id="t155" class="t b" style="top:307px;transform:translateY(0.01px);font-size:3.7px;color:#000;letter-spacing:0.371px;left:473.00px;"><span>0.00</span></div>
<div id="t156" class="t" style="top:313px;transform:translateY(0.99px);font-size:3.8px;color:#000;letter-spacing:-0.110px;left:78.60px;"><span>Please Select</span></div>
<div id="t157" class="t" style="top:313px;transform:translateY(0.81px);font-size:3.8px;color:#000;letter-spacing:-0.041px;left:339.40px;"><span>Please select</span></div>
<div id="t158" class="t b" style="top:313px;transform:translateY(0.81px);font-size:3.7px;color:#000;letter-spacing:0.371px;left:473.00px;"><span>0.00</span></div>
<div id="t159" class="t" style="top:320px;transform:translateY(0.66px);font-size:3.1px;color:#2a2a9c;letter-spacing:0.167px;left:56.30px;"><span>Provide details for new claims or changes to your dependant's particulars.</span></div>
<div id="t160" class="t b" style="top:331px;transform:translateY(0.93px);font-size:3.2px;color:#000;letter-spacing:0.193px;left:40.00px;"><span>11. Grandparent Caregiver</span></div>
<div id="t161" class="t b" style="top:331px;transform:translateY(0.52px);font-size:3.7px;color:#111;letter-spacing:0.271px;right:1.93px;"><span>0.00</span></div>
<div id="t162" class="t" style="top:337px;transform:translateY(0.74px);font-size:3.1px;color:#111;letter-spacing:0.176px;left:56.30px;"><span>This relief is only applicable for female taxpayers who are married/divorced/widowed and the dependant is living in Singapore.</span></div>
<div id="t163" class="t b" style="top:345px;transform:translateY(0.25px);font-size:3.45px;color:#000;letter-spacing:0.085px;left:46.34px;width:200px;text-align:center;"><span>Identification</span></div>
<div id="t164" class="t b" style="top:348px;transform:translateY(0.95px);font-size:3.45px;color:#000;letter-spacing:0.073px;left:46.34px;width:200px;text-align:center;"><span>Type</span></div>
<div id="t165" class="t b" style="top:345px;transform:translateY(0.15px);font-size:3.45px;color:#000;letter-spacing:0.085px;left:185.04px;width:200px;text-align:center;"><span>Identification</span></div>
<div id="t166" class="t b" style="top:348px;transform:translateY(0.85px);font-size:3.45px;color:#000;letter-spacing:0.227px;left:185.11px;width:200px;text-align:center;"><span>No.</span></div>
<div id="t167" class="t b" style="top:347px;transform:translateY(0.27px);font-size:3.45px;color:#000;letter-spacing:0.026px;left:290.51px;width:200px;text-align:center;"><span>Living in Singapore?</span></div>
<div id="t168" class="t b" style="top:347px;transform:translateY(0.21px);font-size:3.45px;color:#000;letter-spacing:0.186px;left:472.00px;"><span>Amount (S$)</span></div>
<div id="t169" class="t" style="top:354px;transform:translateY(0.88px);font-size:3.8px;color:#000;letter-spacing:-0.124px;left:377.40px;"><span>Please select</span></div>
<div id="t170" class="t" style="top:354px;transform:translateY(0.97px);font-size:3.6px;color:#111;right:120.00px;"><span>0</span></div>
<div id="t171" class="t" style="top:354px;transform:translateY(0.86px);font-size:3.3px;color:#222;left:489.00px;"><span>.00</span></div>
<div id="t172" class="t" style="top:361px;transform:translateY(0.86px);font-size:3.1px;color:#2a2a9c;letter-spacing:0.167px;left:56.30px;"><span>Provide details for new claims or changes to your dependant's particulars.</span></div>
<div id="t173" class="t b" style="top:373px;transform:translateY(0.63px);font-size:3.2px;color:#000;letter-spacing:0.281px;left:40.00px;"><span>12.</span></div>
<div id="t174" class="t b" style="top:373px;transform:translateY(0.42px);font-size:3.2px;color:#26269a;letter-spacing:0.246px;left:46.20px;"><span>Handicapped Brother/Sister</span></div>
<div id="t175" class="t b" style="top:372px;transform:translateY(0.57px);font-size:3.7px;color:#111;letter-spacing:0.271px;right:1.93px;"><span>0.00</span></div>
<div id="t176" class="t b" style="top:384px;transform:translateY(0.93px);font-size:3.2px;color:#000;letter-spacing:0.169px;left:40.00px;"><span>13. CPF/Provident Fund</span></div>
<div id="t177" class="t b" style="top:384px;transform:translateY(0.42px);font-size:3.7px;color:#111;letter-spacing:0.271px;right:1.93px;"><span>0.00</span></div>
<div id="t178" class="t" style="top:392px;transform:translateY(0.16px);font-size:3.1px;color:#111;letter-spacing:0.163px;left:56.30px;"><span>CPF/Provident Fund employee contributions in the year 2015 if your employer</span></div>
<div id="t179" class="t" style="top:395px;transform:translateY(0.66px);font-size:3.1px;color:#111;letter-spacing:0.168px;left:56.30px;"><span>is not participating in the Auto-Inclusion Scheme for Employment income.</span></div>
<div id="t180" class="t" style="top:399px;transform:translateY(0.37px);font-size:3.1px;color:#111;letter-spacing:0.103px;left:56.30px;"><span>Please do NOT include Self-Employed CPF contributions.</span></div>
<div id="t181" class="t" style="top:396px;transform:translateY(0.15px);font-size:3.6px;color:#111;right:94.00px;"><span>0</span></div>
<div id="t182" class="t" style="top:396px;transform:translateY(0.04px);font-size:3.3px;color:#222;left:515.00px;"><span>.00</span></div>
<div id="t183" class="t b" style="top:411px;transform:translateY(0.43px);font-size:3.2px;color:#000;letter-spacing:0.180px;left:40.00px;"><span>14. Life Insurance</span></div>
<div id="t184" class="t b" style="top:410px;transform:translateY(0.72px);font-size:3.7px;color:#111;letter-spacing:0.271px;right:1.93px;"><span>0.00</span></div>
<div id="t185" class="t" style="top:416px;transform:translateY(0.64px);font-size:3.1px;color:#111;letter-spacing:0.165px;left:56.30px;"><span>If your CPF contributions are $5,000 or more, no deduction will be allowed for any life insurance premiums paid.</span></div>
<div id="t186" class="t" style="top:420px;transform:translateY(0.32px);font-size:3.1px;color:#111;letter-spacing:0.164px;left:56.30px;"><span>Where the CPF contributions are less than $5,000, the total amount of relief allowable for CPF and life insurance premiums shall not exceed $5,000.</span></div>
<div id="t187" class="t" style="top:428px;transform:translateY(0.16px);font-size:3.1px;color:#111;letter-spacing:0.175px;left:56.30px;"><span>Total premiums paid directly to life insurance companies with branches in Singapore</span></div>
<div id="t188" class="t" style="top:428px;transform:translateY(0.45px);font-size:3.6px;color:#111;right:94.00px;"><span>0</span></div>
<div id="t189" class="t" style="top:428px;transform:translateY(0.34px);font-size:3.3px;color:#222;left:515.00px;"><span>.00</span></div>
<div id="t190" class="t" style="top:434px;transform:translateY(0.87px);font-size:3.1px;color:#2a2a9c;letter-spacing:0.162px;left:56.30px;"><span>Provide details of new claims for Life Insurance Relief.</span></div>
<div id="t191" class="t b" style="top:446px;transform:translateY(0.94px);font-size:3.2px;color:#000;letter-spacing:0.168px;left:40.00px;"><span>15. Course Fees</span></div>
<div id="t192" class="t" style="top:446px;transform:translateY(0.49px);font-size:3.6px;color:#111;right:8.80px;"><span>0</span></div>
<div id="t193" class="t" style="top:446px;transform:translateY(0.38px);font-size:3.3px;color:#222;left:600.20px;"><span>.00</span></div>
<div id="t194" class="t b" style="top:459px;transform:translateY(0.93px);font-size:3.2px;color:#000;letter-spacing:0.209px;left:40.00px;"><span>16. Foreign Maid Levy</span></div>
<div id="t195" class="t" style="top:459px;transform:translateY(0.68px);font-size:3.3px;color:#222;left:600.20px;"><span>.00</span></div>
<div id="t196" class="t" style="top:465px;transform:translateY(0.67px);font-size:3.1px;color:#111;letter-spacing:0.155px;left:56.30px;"><span>Please enter twice the amount of levy paid in the year 2015.</span></div>
<div id="t197" class="t" style="top:469px;transform:translateY(0.31px);font-size:3.1px;color:#111;letter-spacing:0.190px;left:56.30px;"><span>This relief is only applicable for female taxpayers who are (i)married; or (ii) separated/divorced/widowed and have children living with them for whom they can claim child relief.</span></div>
<div id="t198" class="t b" style="top:479px;transform:translateY(0.83px);font-size:3.2px;color:#000;letter-spacing:0.148px;left:40.00px;"><span>17. CPF Cash Top-up</span></div>
<div id="t199" class="t b" style="top:479px;transform:translateY(0.92px);font-size:3.7px;color:#111;letter-spacing:0.271px;right:1.93px;"><span>0.00</span></div>
<div id="t200" class="t b" style="top:490px;transform:translateY(0.52px);font-size:3.2px;color:#000;letter-spacing:0.211px;left:40.00px;"><span>18. Supplementary Retirement Scheme (SRS)</span></div>
<div id="t201" class="t b" style="top:490px;transform:translateY(0.72px);font-size:3.7px;color:#111;letter-spacing:0.271px;right:1.93px;"><span>0.00</span></div>
<div id="t202" class="t b" style="top:501px;transform:translateY(0.52px);font-size:3.5px;color:#000;letter-spacing:0.137px;left:40.00px;"><span>19. NSMan - self/wife/parent</span></div>
<div id="t203" class="t b" style="top:501px;transform:translateY(0.42px);font-size:3.7px;color:#111;letter-spacing:0.271px;right:1.93px;"><span>0.00</span></div>
<div id="t204" class="t b" style="top:514px;transform:translateY(0.01px);font-size:3.2px;color:#1a1a40;letter-spacing:0.159px;left:40.00px;"><span>20. TOTAL DEDUCTIONS AND RELIEFS</span></div>
<div id="t205" class="t b" style="top:526px;transform:translateY(0.32px);font-size:3.2px;color:#000;letter-spacing:0.189px;left:40.00px;"><span>21. Singapore Tax Deducted at Source</span></div>
<div id="t206" class="t b" style="top:526px;transform:translateY(0.42px);font-size:3.7px;color:#111;letter-spacing:0.271px;right:1.93px;"><span>0.00</span></div>
<div id="t207" class="t b" style="top:538px;transform:translateY(0.31px);font-size:3.7px;color:#000;letter-spacing:0.023px;left:40.00px;"><span>REBATES</span></div>
<div id="t208" class="t b" style="top:549px;transform:translateY(0.41px);font-size:3.2px;color:#000;letter-spacing:0.203px;left:40.00px;"><span>22. Parenthood Tax Rebate (For NEW Claims Only)</span></div>
<div id="t209" class="t" style="top:558px;transform:translateY(0.67px);font-size:3.1px;color:#2a2a9c;letter-spacing:0.178px;left:56.30px;"><span>Claim Parenthood Tax Rebate for a newborn child for the first time.</span></div>
<div id="t210" class="t" style="top:570px;transform:translateY(0.23px);font-size:2.9px;color:#111;letter-spacing:0.036px;left:-31.18px;width:200px;text-align:center;"><span>Main Tax Form</span></div>
<div id="t211" class="t b" style="top:570px;transform:translateY(0.18px);font-size:3.2px;color:#000;letter-spacing:0.217px;left:83.30px;"><span>Click on &lt;Main Tax Form&gt; to proceed with your filing.</span></div>
<div id="t212" class="t" style="top:582px;transform:translateY(0.79px);font-size:3.1px;color:#222;letter-spacing:0.070px;left:38.80px;"><span>IRAS 12/04/2016 04P</span></div>
<div id="t213" class="t" style="top:587px;transform:translateY(0.80px);font-size:3.1px;color:#2a2a9c;letter-spacing:0.132px;left:38.80px;"><span>Privacy Policy / Terms of Use</span></div>
<div id="t214" class="t" style="top:587px;transform:translateY(0.35px);font-size:3.1px;color:#222;letter-spacing:0.165px;left:515.00px;"><span>Copyright (c) 2016 Inland Revenue Authority of Singapore.</span></div>
</div>
<svg class="ov" width="607" height="596" viewBox="0 0 607 596"><circle cx="111.50" cy="78.60" r="1.75" fill="#15155c"/><rect x="111.20" y="77.70" width="0.6" height="1.8" fill="#9a9ad0"/><circle cx="112.60" cy="98.00" r="1.75" fill="#15155c"/><rect x="112.30" y="97.10" width="0.6" height="1.8" fill="#9a9ad0"/><circle cx="97.40" cy="156.90" r="1.75" fill="#15155c"/><rect x="97.10" y="156.00" width="0.6" height="1.8" fill="#9a9ad0"/><circle cx="110.40" cy="187.20" r="1.75" fill="#15155c"/><rect x="110.10" y="186.30" width="0.6" height="1.8" fill="#9a9ad0"/><circle cx="70.00" cy="209.10" r="1.75" fill="#15155c"/><rect x="69.70" y="208.20" width="0.6" height="1.8" fill="#9a9ad0"/><circle cx="88.00" cy="333.80" r="1.75" fill="#15155c"/><rect x="87.70" y="332.90" width="0.6" height="1.8" fill="#9a9ad0"/><circle cx="97.60" cy="375.10" r="1.75" fill="#15155c"/><rect x="97.30" y="374.20" width="0.6" height="1.8" fill="#9a9ad0"/><circle cx="82.60" cy="386.50" r="1.75" fill="#15155c"/><rect x="82.30" y="385.60" width="0.6" height="1.8" fill="#9a9ad0"/><circle cx="73.80" cy="412.80" r="1.75" fill="#15155c"/><rect x="73.50" y="411.90" width="0.6" height="1.8" fill="#9a9ad0"/><circle cx="69.40" cy="448.90" r="1.75" fill="#15155c"/><rect x="69.10" y="448.00" width="0.6" height="1.8" fill="#9a9ad0"/><circle cx="80.00" cy="461.80" r="1.75" fill="#15155c"/><rect x="79.70" y="460.90" width="0.6" height="1.8" fill="#9a9ad0"/><circle cx="61.20" cy="540.20" r="1.75" fill="#15155c"/><rect x="60.90" y="539.30" width="0.6" height="1.8" fill="#9a9ad0"/><g><text x="162.34" y="189.85" font-family="'Liberation Sans','Noto Sans CJK JP',sans-serif" font-size="7.8" fill="#9c2c2c" textLength="126.4" lengthAdjust="spacingAndGlyphs">配偶者の年間所得が$4000以下なら、</text></g><g><text x="188.96" y="198.82" font-family="'Liberation Sans','Noto Sans CJK JP',sans-serif" font-size="7.7" fill="#9c2c2c" textLength="74.4" lengthAdjust="spacingAndGlyphs">配偶者分で$2000控除</text></g><g><text x="368.13" y="183.33" font-family="'Liberation Sans','Noto Sans CJK JP',sans-serif" font-size="7.7" fill="#9c2c2c" textLength="134.1" lengthAdjust="spacingAndGlyphs">16歳未満の子供は1人当たり$4000控除</text></g><g><text x="366.84" y="192.28" font-family="'Liberation Sans','Noto Sans CJK JP',sans-serif" font-size="7.3" fill="#9c2c2c" textLength="136.5" lengthAdjust="spacingAndGlyphs">（ハンディキャップがある場合は$5500）</text></g><g><text x="184.45" y="365.71" font-family="'Liberation Sans','Noto Sans CJK JP',sans-serif" font-size="7.66" fill="#9c2c2c" textLength="122.6" lengthAdjust="spacingAndGlyphs">祖父母が子供の面倒を見ていたら、</text></g><g><text x="206.78" y="374.80" font-family="'Liberation Sans','Noto Sans CJK JP',sans-serif" font-size="7.63" fill="#9c2c2c" textLength="76.3" lengthAdjust="spacingAndGlyphs">特別控除が受けられる</text></g><g><text x="214.99" y="446.09" font-family="'Liberation Sans','Noto Sans CJK JP',sans-serif" font-size="7.09" fill="#cf3c3c" textLength="106.3" lengthAdjust="spacingAndGlyphs">メイドさんを雇っている家庭は、</text></g><g><text x="213.60" y="455.57" font-family="'Liberation Sans','Noto Sans CJK JP',sans-serif" font-size="7.29" fill="#cf3c3c" textLength="107.9" lengthAdjust="spacingAndGlyphs">メイド税×2倍の額が控除される</text></g><g><text x="236.50" y="465.70" font-family="'Liberation Sans','Noto Sans CJK JP',sans-serif" font-size="7.62" fill="#cf3c3c" textLength="61.0" lengthAdjust="spacingAndGlyphs">（働く女性限定）</text></g><g><text x="124.27" y="585.88" font-family="'Liberation Sans','Noto Sans CJK JP',sans-serif" font-size="7.57" fill="#9c2c2c" textLength="136.3" lengthAdjust="spacingAndGlyphs">必要事項を入力したら、元の画面に戻る</text></g><path d="M107.50 195.35 l1.2 1.2 l1.2 -1.2" fill="none" stroke="#333" stroke-width="0.5"/><path d="M196.70 246.35 l1.2 1.2 l1.2 -1.2" fill="none" stroke="#333" stroke-width="0.5"/><path d="M344.40 246.35 l1.2 1.2 l1.2 -1.2" fill="none" stroke="#333" stroke-width="0.5"/><path d="M480.60 246.35 l1.2 1.2 l1.2 -1.2" fill="none" stroke="#333" stroke-width="0.5"/><path d="M196.70 256.65 l1.2 1.2 l1.2 -1.2" fill="none" stroke="#333" stroke-width="0.5"/><path d="M344.40 256.65 l1.2 1.2 l1.2 -1.2" fill="none" stroke="#333" stroke-width="0.5"/><path d="M480.60 256.65 l1.2 1.2 l1.2 -1.2" fill="none" stroke="#333" stroke-width="0.5"/><path d="M196.70 267.35 l1.2 1.2 l1.2 -1.2" fill="none" stroke="#333" stroke-width="0.5"/><path d="M344.40 267.35 l1.2 1.2 l1.2 -1.2" fill="none" stroke="#333" stroke-width="0.5"/><path d="M480.60 267.35 l1.2 1.2 l1.2 -1.2" fill="none" stroke="#333" stroke-width="0.5"/><path d="M196.70 277.45 l1.2 1.2 l1.2 -1.2" fill="none" stroke="#333" stroke-width="0.5"/><path d="M344.40 277.45 l1.2 1.2 l1.2 -1.2" fill="none" stroke="#333" stroke-width="0.5"/><path d="M480.60 277.45 l1.2 1.2 l1.2 -1.2" fill="none" stroke="#333" stroke-width="0.5"/><path d="M196.70 287.85 l1.2 1.2 l1.2 -1.2" fill="none" stroke="#333" stroke-width="0.5"/><path d="M344.40 287.85 l1.2 1.2 l1.2 -1.2" fill="none" stroke="#333" stroke-width="0.5"/><path d="M480.60 287.85 l1.2 1.2 l1.2 -1.2" fill="none" stroke="#333" stroke-width="0.5"/><path d="M102.90 308.95 l1.2 1.2 l1.2 -1.2" fill="none" stroke="#333" stroke-width="0.5"/><path d="M219.90 308.95 l1.2 1.2 l1.2 -1.2" fill="none" stroke="#333" stroke-width="0.5"/><path d="M449.40 308.95 l1.2 1.2 l1.2 -1.2" fill="none" stroke="#333" stroke-width="0.5"/><path d="M102.90 315.75 l1.2 1.2 l1.2 -1.2" fill="none" stroke="#333" stroke-width="0.5"/><path d="M219.90 315.75 l1.2 1.2 l1.2 -1.2" fill="none" stroke="#333" stroke-width="0.5"/><path d="M449.40 315.75 l1.2 1.2 l1.2 -1.2" fill="none" stroke="#333" stroke-width="0.5"/><path d="M170.40 356.85 l1.2 1.2 l1.2 -1.2" fill="none" stroke="#333" stroke-width="0.5"/><path d="M400.60 356.85 l1.2 1.2 l1.2 -1.2" fill="none" stroke="#333" stroke-width="0.5"/><path d="M161.0 190.4 L118.4 193.4" fill="none" stroke="#a02c2c" stroke-width="0.7"/><path d="M118.4 193.4 L121.90 191.46 L122.14 194.83 Z" fill="#a02c2c"/><path d="M435.6 198.3 L420.0 241.0" fill="none" stroke="#a02c2c" stroke-width="0.7"/><path d="M420.0 241.0 L419.66 237.01 L422.83 238.17 Z" fill="#a02c2c"/><path d="M208.6 355.8 L182.4 343.9" fill="none" stroke="#a02c2c" stroke-width="0.7"/><path d="M182.4 343.9 L186.40 343.86 L185.00 346.94 Z" fill="#a02c2c"/><path d="M206.6 452.9 Q150 456.0 88.9 462.4" fill="none" stroke="#c42c2c" stroke-width="0.65"/><path d="M88.9 462.4 L93.02 459.93 L93.44 463.96 Z" fill="#c42c2c"/><path d="M122.5 581.0 Q106 582.0 94.1 578.2" fill="none" stroke="#a02c2c" stroke-width="0.7"/><path d="M94.1 578.2 L98.66 577.62 L97.48 581.32 Z" fill="#a02c2c"/><ellipse cx="69.0" cy="572.8" rx="21.9" ry="8.3" fill="none" stroke="#a83030" stroke-width="0.7" transform="rotate(-2 69 572.8)"/></svg>
</div></body></html>
